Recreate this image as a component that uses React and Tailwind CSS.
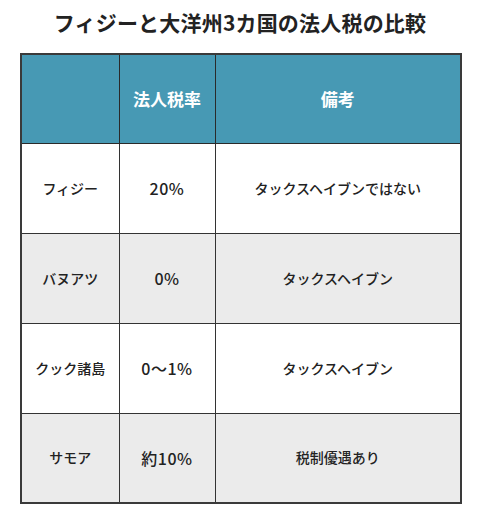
const rows = [
  { name: 'フィジー', rate: '20%', note: 'タックスヘイブンではない', gray: false },
  { name: 'バヌアツ', rate: '0%', note: 'タックスヘイブン', gray: true },
  { name: 'クック諸島', rate: '0〜1%', note: 'タックスヘイブン', gray: false },
  { name: 'サモア', rate: '約10%', note: '税制優遇あり', gray: true },
];

export default function App() {
  return (
    <div className="w-[480px] h-[516px] bg-white font-['Noto_Sans_CJK_JP',sans-serif] text-[#222]">
      <h1 className="h-[44px] pt-[2px] flex items-center justify-center text-[21px] font-bold tracking-[0.2px]">
        フィジーと大洋州3カ国の法人税の比較
      </h1>
      <div className="mt-[9px] px-[20px]">
        <table className="w-[442px] border-collapse border-2 border-[#3a3a3a] table-fixed">
          <colgroup>
            <col className="w-[98px]" />
            <col className="w-[96px]" />
            <col />
          </colgroup>
          <thead>
            <tr className="h-[89px] bg-[#4799b4] text-white text-[17px]">
              <th className="border border-[#2a2a2a]" />
              <th className="border border-[#2a2a2a] font-bold">法人税率</th>
              <th className="border border-[#2a2a2a] font-bold">備考</th>
            </tr>
          </thead>
          <tbody>
            {rows.map((r) => (
              <tr key={r.name} className={`h-[90px] text-[14px] ${r.gray ? 'bg-[#ebebeb]' : 'bg-white'}`}>
                <td className="border border-[#333] text-center font-medium">{r.name}</td>
                <td className="border border-[#333] text-center font-medium text-[16px] tracking-[0.5px]">{r.rate}</td>
                <td className="border border-[#333] text-center font-medium">{r.note}</td>
              </tr>
            ))}
          </tbody>
        </table>
      </div>
    </div>
  );
}
